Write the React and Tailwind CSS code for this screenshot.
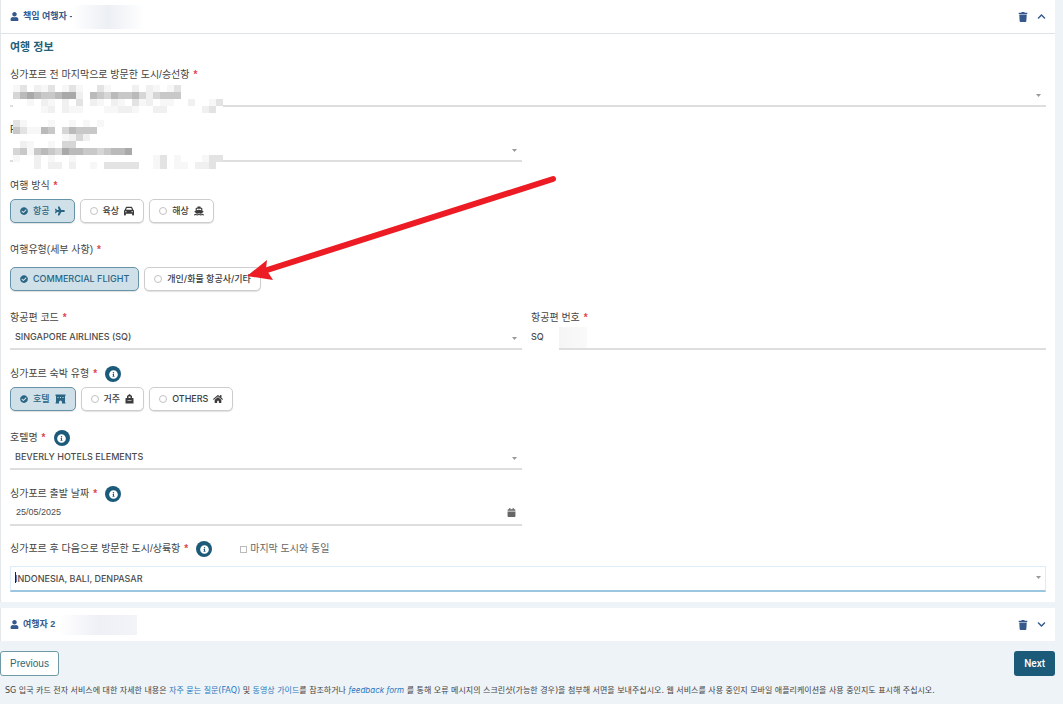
import { useState } from "react";
import {
  FaCalendar,
  FaCheckCircle,
  FaChevronDown,
  FaChevronUp,
  FaHome,
  FaInfoCircle,
  FaPlane,
  FaTrash,
  FaUser,
} from "react-icons/fa";
import { FaCar, FaShip } from "react-icons/fa6";

// Greyscale levels for the redacted values, one digit per 7px cell
const SHADES = ["", "#f7f7f7", "#f0f0f0", "#e3e3e3", "#d6d6d6", "#c8c8c8", "#bababa", "#a9a9a9"];
const REDACTED = [
  "130213013100310002021013000000",
  "467655677206546556424555000000",
  "001021020302102103120110020013",
  "000012021100011221002200000230",
  "000000000000000000000000000000",
  "310001001010100000000000000000",
  "531165046555000000000000000000",
  "000000012420000000000000000000",
  "021001044000000000000000000000",
  "451565476655456670000000000000",
  "100201001000000000001301000133",
  "000202202001033333001301102230",
];

function Redacted() {
  return (
    <svg className="absolute left-[13px] top-[85px] z-10" width="210" height="84" aria-hidden="true">
      <rect width="210" height="84" fill="#fff" />
      {REDACTED.map((row, y) =>
        row.split("").map((n, x) =>
          n === "0" ? null : <rect key={`${x}-${y}`} x={x * 7} y={y * 7} width="7" height="7" fill={SHADES[n]} />
        )
      )}
    </svg>
  );
}

function HotelIcon() {
  return (
    <svg width="11" height="10" viewBox="0 0 22 20" fill="currentColor" aria-hidden="true">
      <path d="M1 1h20v3h-1v13h1v2h-7v-3a3 3 0 0 0-6 0v3H1v-2h1V4H1z" />
      <path d="M5 6h2v2H5zM10 6h2v2h-2zM15 6h2v2h-2z" fill="#cfe0e9" />
    </svg>
  );
}

function ResidenceIcon() {
  return (
    <svg width="9" height="10" viewBox="0 0 18 20" fill="currentColor" aria-hidden="true">
      <path d="M9 0 14 4v4h2a1 1 0 0 1 1 1v10H1V9a1 1 0 0 1 1-1h2V4zM7 5v3h4V5z" fillRule="evenodd" />
      <path d="M5 12h8v2H5z" fill="#aaa" />
    </svg>
  );
}

function Label({ id, children, info, required = true }) {
  return (
    <div className="flex h-5 items-center pt-[2px]">
      <label htmlFor={id} className="text-[10px] leading-5 text-[#444]">
        {children}
        {required && <span className="ml-1 font-bold text-[#e0464c]">*</span>}
      </label>
      {info && (
        <button
          type="button"
          aria-label="Info"
          className="ml-2 flex size-4 items-center justify-center rounded-full bg-[#1c5a7a] text-white"
        >
          <FaInfoCircle size={9} />
        </button>
      )}
    </div>
  );
}

function Select({ id, value }) {
  return (
    <div className="relative">
      <select
        id={id}
        className="block h-[23px] w-full appearance-none border-b-2 border-[#dedede] bg-transparent pb-[2px] pl-[5px] font-['Inter'] text-[9px] font-medium text-[#4c4c4c] outline-none"
      >
        <option>{value}</option>
      </select>
      <Caret />
    </div>
  );
}

function Caret() {
  return (
    <svg className="pointer-events-none absolute right-[5px] top-[10px]" width="5" height="3" viewBox="0 0 5 3">
      <path d="M0 0h5L2.5 3z" fill="#999" />
    </svg>
  );
}

function Chips({ name, label, options }) {
  const [selected, setSelected] = useState(options[0].text);

  return (
    <div role="radiogroup" aria-label={label} className="flex flex-wrap gap-[5px]">
      {options.map(({ text, Icon }) => {
        const on = text === selected;
        return (
          <label
            key={text}
            className={
              "relative flex h-6 items-center gap-[5px] rounded-[5px] border px-[9px] font-['Inter','Noto_Sans_CJK_KR',sans-serif] text-[9px] font-medium shadow-[0_1px_1px_rgba(0,0,0,0.12)] " +
              (on ? "border-[#6593a8] bg-[#cfe0e9] text-[#2a6583]" : "border-[#cdcdcd] bg-white text-[#3c3c3c]")
            }
          >
            <input type="radio" name={name} checked={on} onChange={() => setSelected(text)} className="sr-only" />
            {on ? <FaCheckCircle size={8} /> : <span className="size-2 rounded-full border border-[#c2c2c2]" />}
            <span>{text}</span>
            {Icon && <Icon size={10} />}
          </label>
        );
      })}
    </div>
  );
}

function TravellerHeader({ title, open, children }) {
  return (
    <div className="flex h-[33px] items-center px-[9px] text-[#35598c]">
      <FaUser size={9} />
      <h2 className="ml-1 text-[9px] font-bold">{title}</h2>
      {children}
      <button type="button" aria-label="Delete traveller" className="ml-auto">
        <FaTrash size={10} />
      </button>
      <button type="button" aria-label="Toggle traveller" className="ml-[9px]">
        {open ? <FaChevronUp size={9} /> : <FaChevronDown size={9} />}
      </button>
    </div>
  );
}

function Arrow() {
  return (
    <svg className="pointer-events-none absolute left-[240px] top-[170px] z-20" width="325" height="120" aria-hidden="true">
      <path d="M313 9 24 101" stroke="#ed1c24" strokeWidth="6" strokeLinecap="round" />
      <path d="M7 106 27 90 26 99 33 110z" fill="#ed1c24" />
    </svg>
  );
}

export default function App() {
  return (
    <div className="relative min-h-screen bg-[#eef3f7] pr-2 font-['Liberation_Sans','Noto_Sans_CJK_KR',sans-serif]">
      <Arrow />
      <Redacted />

      <section className="border-l border-[#e3e7ea] bg-white">
        <TravellerHeader title="책임 여행자 -" open>
          <div className="h-6 w-[72px] bg-linear-to-r from-white via-[#eceff4] to-white" />
        </TravellerHeader>

        <form className="border-t border-[#dfe2e6] px-[9px] pb-[10px] pt-[3px]">
          <h3 className="text-[11px] font-bold leading-5 text-[#245f78]">여행 정보</h3>

          <div className="mb-3 mt-[7px]">
            <Label id="lastCity">싱가포르 전 마지막으로 방문한 도시/승선항</Label>
            <Select id="lastCity" />
          </div>

          <div className="grid grid-cols-[512fr_515fr] gap-x-[9px]">
            <div className="mb-[13px]">
              <Label id="port" required={false}>P</Label>
              <Select id="port" />
            </div>

            <div className="col-span-2 mb-4">
              <Label>여행 방식</Label>
              <div className="mt-1">
                <Chips
                  name="mode"
                  label="여행 방식"
                  options={[
                    { text: "항공", Icon: FaPlane },
                    { text: "육상", Icon: FaCar },
                    { text: "해상", Icon: FaShip },
                  ]}
                />
              </div>
            </div>

            <div className="col-span-2 mb-4">
              <Label>여행유형(세부 사항)</Label>
              <div className="mt-2">
                <Chips
                  name="type"
                  label="여행유형"
                  options={[{ text: "COMMERCIAL FLIGHT" }, { text: "개인/화물 항공사/기타" }]}
                />
              </div>
            </div>

            <div className="mb-[13px]">
              <Label id="flightCode">항공편 코드</Label>
              <Select id="flightCode" value="SINGAPORE AIRLINES (SQ)" />
            </div>
            <div className="mb-[13px]">
              <Label id="flightNo">항공편 번호</Label>
              <div className="flex">
                <span className="w-7 font-['Inter'] text-[9px] font-medium leading-5 text-[#4c4c4c]">SQ</span>
                <div className="flex-1 border-b-2 border-[#dedede]">
                  <input
                    id="flightNo"
                    className="block h-[21px] w-7 bg-linear-to-r from-[#f5f5f5] to-[#fafafa] outline-none"
                  />
                </div>
              </div>
            </div>

            <div className="col-span-2 mb-4">
              <Label info>싱가포르 숙박 유형</Label>
              <div className="mt-1">
                <Chips
                  name="stay"
                  label="싱가포르 숙박 유형"
                  options={[
                    { text: "호텔", Icon: HotelIcon },
                    { text: "거주", Icon: ResidenceIcon },
                    { text: "OTHERS", Icon: FaHome },
                  ]}
                />
              </div>
            </div>

            <div className="mb-[13px]">
              <Label id="hotel" info>호텔명</Label>
              <Select id="hotel" value="BEVERLY HOTELS ELEMENTS" />
            </div>

            <div className="col-start-1 mb-3">
              <Label id="departure" info>싱가포르 출발 날짜</Label>
              <div className="flex h-[23px] items-center border-b-2 border-[#dedede] px-[6px] pb-[2px]">
                <input
                  id="departure"
                  defaultValue="25/05/2025"
                  className="min-w-0 flex-1 font-['Liberation_Sans'] text-[9px] text-[#4c4c4c] outline-none"
                />
                <FaCalendar size={9} className="text-[#666]" />
              </div>
            </div>
          </div>

          <div className="flex">
            <Label id="nextCity" info>싱가포르 후 다음으로 방문한 도시/상륙항</Label>
            <label className="ml-7 flex h-5 items-center gap-[3px] pt-[2px] text-[10px] leading-5 text-[#666]">
              <input type="checkbox" className="size-[7px] appearance-none border border-[#bbb] bg-white" />
              마지막 도시와 동일
            </label>
          </div>
          <div className="relative mt-2">
            <input
              id="nextCity"
              defaultValue="INDONESIA, BALI, DENPASAR"
              className="block h-[26px] w-full border border-b-2 border-[#dcecf8] border-b-[#9cc6e0] pl-[4px] font-['Inter'] text-[9px] font-medium text-[#4c4c4c] outline-none"
            />
            <span className="absolute left-[5px] top-[6px] h-[11px] w-px bg-[#222]" />
            <Caret />
          </div>
        </form>
      </section>

      <section className="mt-[6px] border-l border-[#e3e7ea] bg-white">
        <TravellerHeader title="여행자 2">
          <div className="ml-1 h-5 w-[78px] bg-linear-to-r from-white via-[#eef0f6] to-[#f3f4f8]" />
        </TravellerHeader>
      </section>

      <div className="mt-[10px] flex justify-between">
        <button type="button" className="h-[25px] rounded-[3px] border border-[#6f9aa5] bg-white px-[9px] text-[10px] text-[#2f6673]">
          Previous
        </button>
        <button type="button" className="h-[25px] rounded-[3px] bg-[#1c5a7a] px-[10px] font-['Roboto'] text-[10px] font-medium text-white">
          Next
        </button>
      </div>

      <p className="pl-[5px] pt-1 font-['DejaVu_Sans','Noto_Sans_CJK_KR',sans-serif] text-[8px] leading-5 text-[#444]">
        SG 입국 카드 전자 서비스에 대한 자세한 내용은{" "}
        <a href="#faq" className="text-[#2a78c0]">자주 묻는 질문(FAQ)</a> 및{" "}
        <a href="#video" className="text-[#2a78c0]">동영상 가이드</a>를 참조하거나{" "}
        <a href="#feedback" className="font-['Inter'] italic text-[#2a78c0]">feedback form</a> 를 통해 오류 메시지의 스크린샷(가능한
        경우)을 첨부해 서면을 보내주십시오. 웹 서비스를 사용 중인지 모바일 애플리케이션을 사용 중인지도 표시해 주십시오.
      </p>
    </div>
  );
}
